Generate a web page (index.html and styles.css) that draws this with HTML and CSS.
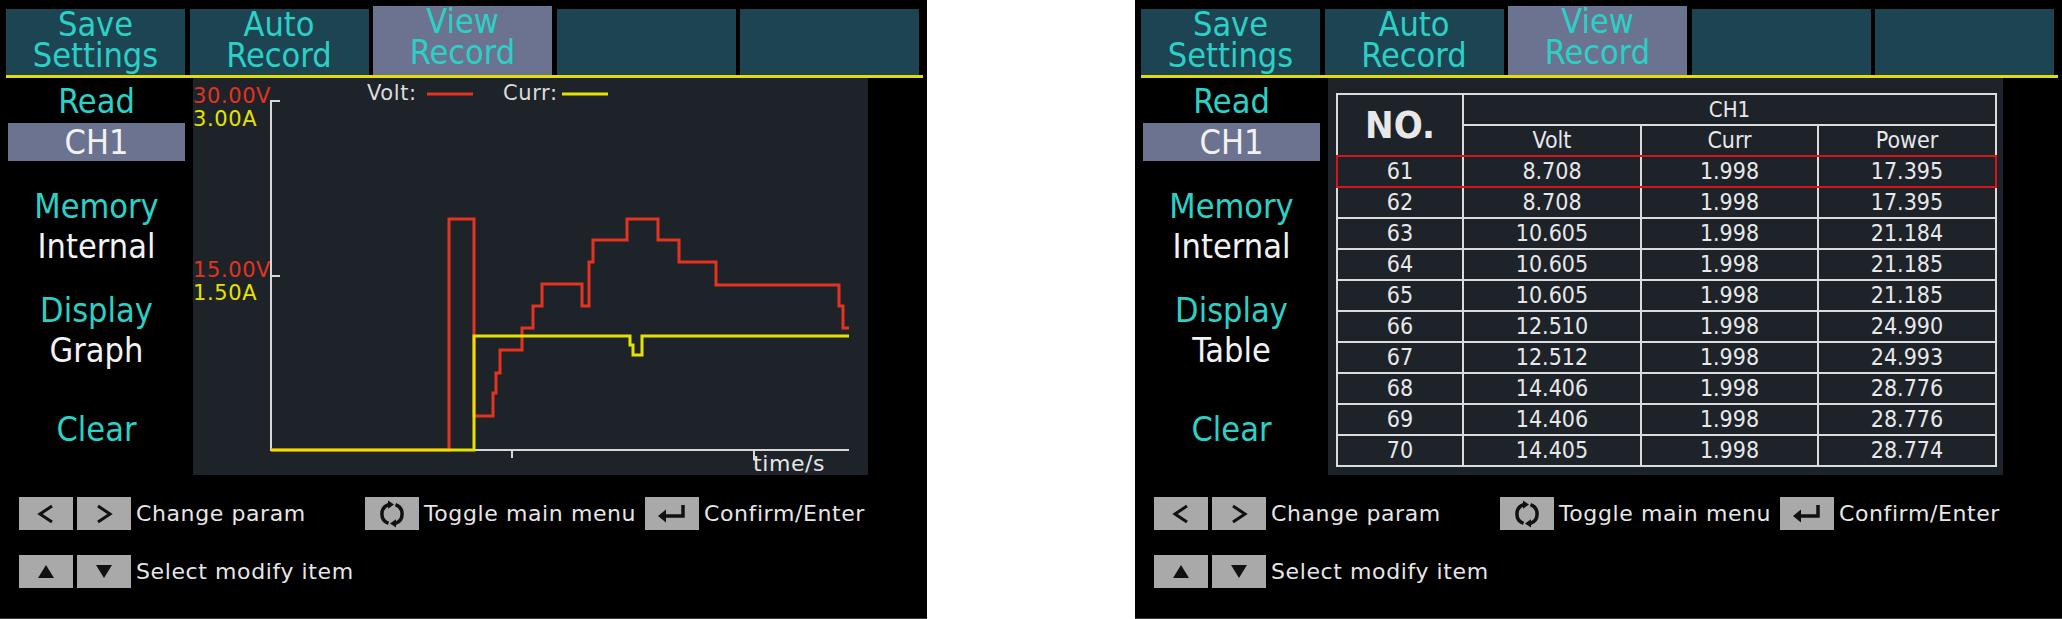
FILE: index.html
```html
<!DOCTYPE html>
<html lang="en">
<head>
    <meta charset="UTF-8">
    <title>Data Record - Graph / Table</title>
    <link rel="stylesheet" href="styles.css">
</head>
<body>

<div class="page">

    <!-- Screen 1: record shown as a graph -->
    <div class="screen">
        <div class="tabs">
            <div class="tab"><div>Save</div><div>Settings</div></div>
            <div class="tab"><div>Auto</div><div>Record</div></div>
            <div class="tab active"><div>View</div><div>Record</div></div>
            <div class="tab"></div>
            <div class="tab"></div>
        </div>
        <div class="main">
            <div class="side">
                <div class="side-read">Read</div>
                <div class="side-box">CH1</div>
                <div class="side-group">
                    <div class="side-label">Memory</div>
                    <div class="side-value">Internal</div>
                </div>
                <div class="side-group">
                    <div class="side-label">Display</div>
                    <div class="side-value">Graph</div>
                </div>
                <div class="side-label side-clear">Clear</div>
            </div>
            <div class="panel">
                <svg class="chart" width="675" height="397" viewBox="0 0 675 397">
                    <text class="lbl-volt" x="0" y="25">30.00V</text>
                    <text class="lbl-curr" x="0" y="48">3.00A</text>
                    <text class="lbl-volt" x="0" y="199">15.00V</text>
                    <text class="lbl-curr" x="0" y="222">1.50A</text>

                    <text class="lbl-legend" x="174" y="22">Volt:</text>
                    <line class="tr-volt" x1="234" y1="16" x2="280" y2="16"/>
                    <text class="lbl-legend" x="310" y="22">Curr:</text>
                    <line class="tr-curr" x1="369" y1="16" x2="415" y2="16"/>

                    <path class="axis" d="M87 23 H78 V372 H656 M78 198 H87 M319 372 V380 M561 372 V382"/>
                    <text class="lbl-time" x="560" y="393">time/s</text>

                    <path class="tr-volt" d="M78 372 H256 V141 H281 V338 H300 V315 H303 V295 H307 V272 H329 V250 H340 V228 H349 V206 H389 V228 H396 V184 H400 V162 H434 V141 H465 V162 H486 V184 H523 V207 H646 V228 H650 V250 H656"/>
                    <path class="tr-curr" d="M78 372 H281 V258 H437 V267 H440 V277 H449 V258 H656"/>
                </svg>
            </div>
        </div>
        <div class="keys">
            <div class="key-row">
                <div class="hint hint-first">
                    <span class="key"><svg width="18" height="22" viewBox="0 0 18 22"><polyline class="ico" points="15,3 3,11 15,19"/></svg></span>
                    <span class="key"><svg width="18" height="22" viewBox="0 0 18 22"><polyline class="ico" points="3,3 15,11 3,19"/></svg></span>
                    <span class="hint-text">Change param</span>
                </div>
                <div class="hint hint-mid">
                    <span class="key"><svg width="26" height="30" viewBox="0 0 26 30"><path class="ico-bold" d="M9.5 5.6 A10 10 0 0 0 9.5 24.4 M16.5 24.4 A10 10 0 0 0 16.5 5.6"/><polygon class="ico-fill" points="9,1.5 15,5.6 9,9.7"/><polygon class="ico-fill" points="17,20.3 11,24.4 17,28.5"/></svg></span>
                    <span class="hint-text">Toggle main menu</span>
                </div>
                <div class="hint">
                    <span class="key"><svg width="30" height="20" viewBox="0 0 30 20"><path class="ico-bold" d="M26 1 V12 H7"/><polygon class="ico-fill" points="1,12 9,5.5 9,18.5"/></svg></span>
                    <span class="hint-text">Confirm/Enter</span>
                </div>
            </div>
            <div class="key-row">
                <div class="hint">
                    <span class="key"><svg width="16" height="13" viewBox="0 0 16 13"><polygon class="ico-fill" points="0,13 8,0 16,13"/></svg></span>
                    <span class="key"><svg width="16" height="13" viewBox="0 0 16 13"><polygon class="ico-fill" points="0,0 16,0 8,13"/></svg></span>
                    <span class="hint-text">Select modify item</span>
                </div>
            </div>
        </div>
    </div>

    <!-- Screen 2: record shown as a table -->
    <div class="screen">
        <div class="tabs">
            <div class="tab"><div>Save</div><div>Settings</div></div>
            <div class="tab"><div>Auto</div><div>Record</div></div>
            <div class="tab active"><div>View</div><div>Record</div></div>
            <div class="tab"></div>
            <div class="tab"></div>
        </div>
        <div class="main">
            <div class="side">
                <div class="side-read">Read</div>
                <div class="side-box">CH1</div>
                <div class="side-group">
                    <div class="side-label">Memory</div>
                    <div class="side-value">Internal</div>
                </div>
                <div class="side-group">
                    <div class="side-label">Display</div>
                    <div class="side-value">Table</div>
                </div>
                <div class="side-label side-clear">Clear</div>
            </div>
            <div class="panel">
                <table class="records">
                    <colgroup>
                        <col style="width: 126px">
                        <col style="width: 178px">
                        <col style="width: 177px">
                        <col style="width: 178px">
                    </colgroup>
                    <thead>
                        <tr>
                            <th class="col-no" rowspan="2">NO.</th>
                            <th class="col-ch" colspan="3">CH1</th>
                        </tr>
                        <tr>
                            <th>Volt</th>
                            <th>Curr</th>
                            <th>Power</th>
                        </tr>
                    </thead>
                    <tbody>
                        <tr class="current"><td>61</td><td>8.708</td><td>1.998</td><td>17.395</td></tr>
                        <tr><td>62</td><td>8.708</td><td>1.998</td><td>17.395</td></tr>
                        <tr><td>63</td><td>10.605</td><td>1.998</td><td>21.184</td></tr>
                        <tr><td>64</td><td>10.605</td><td>1.998</td><td>21.185</td></tr>
                        <tr><td>65</td><td>10.605</td><td>1.998</td><td>21.185</td></tr>
                        <tr><td>66</td><td>12.510</td><td>1.998</td><td>24.990</td></tr>
                        <tr><td>67</td><td>12.512</td><td>1.998</td><td>24.993</td></tr>
                        <tr><td>68</td><td>14.406</td><td>1.998</td><td>28.776</td></tr>
                        <tr><td>69</td><td>14.406</td><td>1.998</td><td>28.776</td></tr>
                        <tr><td>70</td><td>14.405</td><td>1.998</td><td>28.774</td></tr>
                    </tbody>
                </table>
            </div>
        </div>
        <div class="keys">
            <div class="key-row">
                <div class="hint hint-first">
                    <span class="key"><svg width="18" height="22" viewBox="0 0 18 22"><polyline class="ico" points="15,3 3,11 15,19"/></svg></span>
                    <span class="key"><svg width="18" height="22" viewBox="0 0 18 22"><polyline class="ico" points="3,3 15,11 3,19"/></svg></span>
                    <span class="hint-text">Change param</span>
                </div>
                <div class="hint hint-mid">
                    <span class="key"><svg width="26" height="30" viewBox="0 0 26 30"><path class="ico-bold" d="M9.5 5.6 A10 10 0 0 0 9.5 24.4 M16.5 24.4 A10 10 0 0 0 16.5 5.6"/><polygon class="ico-fill" points="9,1.5 15,5.6 9,9.7"/><polygon class="ico-fill" points="17,20.3 11,24.4 17,28.5"/></svg></span>
                    <span class="hint-text">Toggle main menu</span>
                </div>
                <div class="hint">
                    <span class="key"><svg width="30" height="20" viewBox="0 0 30 20"><path class="ico-bold" d="M26 1 V12 H7"/><polygon class="ico-fill" points="1,12 9,5.5 9,18.5"/></svg></span>
                    <span class="hint-text">Confirm/Enter</span>
                </div>
            </div>
            <div class="key-row">
                <div class="hint">
                    <span class="key"><svg width="16" height="13" viewBox="0 0 16 13"><polygon class="ico-fill" points="0,13 8,0 16,13"/></svg></span>
                    <span class="key"><svg width="16" height="13" viewBox="0 0 16 13"><polygon class="ico-fill" points="0,0 16,0 8,13"/></svg></span>
                    <span class="hint-text">Select modify item</span>
                </div>
            </div>
        </div>
    </div>

</div>

</body>
</html>
```

FILE: styles.css
```css
body {
    margin: 0;
    background: #fff;
    font-family: "DejaVu Sans", sans-serif;
}
.page {
    display: flex;
    gap: 208px;
}
.screen {
    width: 927px;
    height: 619px;
    box-sizing: border-box;
    padding-top: 9px;
    background: #000;
    border-bottom: 1px solid #3a3a3a;
}

/* top menu */
.tabs {
    display: flex;
    gap: 4.5px;
    height: 66px;
    margin: 0 4px 0 6px;
    padding-right: 4px;
    border-bottom: 3px solid #e2dc0a;
}
.tab {
    width: 179px;
    height: 66px;
    flex: none;
    background: #1d4452;
    color: #2bd0c6;
    font-family: "DejaVu Sans Condensed", "DejaVu Sans", sans-serif;
    font-stretch: condensed;
    font-size: 34px;
    line-height: 31px;
    text-align: center;
}
.tab.active {
    height: 69px;
    margin-top: -3px;
    background: #6b7390;
}

/* left menu + content */
.main {
    display: flex;
    height: 397px;
}
.side {
    width: 193px;
    flex: none;
    display: flex;
    flex-direction: column;
    align-items: center;
    font-family: "DejaVu Sans Condensed", "DejaVu Sans", sans-serif;
    font-stretch: condensed;
    font-size: 34px;
    line-height: 40px;
    text-align: center;
}
.side-read {
    margin-top: 5px;
    line-height: 36px;
    color: #2bd0c6;
}
.side-box {
    width: 177px;
    height: 38px;
    margin-top: 4px;
    line-height: 38px;
    background: #6b7390;
    color: #f2f2f2;
}
.side-group {
    margin-top: 25px;
}
.side-group + .side-group {
    margin-top: 24px;
}
.side-label {
    color: #2bd0c6;
}
.side-value {
    color: #f2f2f2;
}
.side-clear {
    margin-top: 39px;
}
.panel {
    width: 675px;
    height: 397px;
    flex: none;
    background: #1e232a;
}

/* chart */
.chart {
    display: block;
    font-family: "DejaVu Sans", sans-serif;
    font-size: 21px;
    letter-spacing: 0.6px;
}
.lbl-volt {
    fill: #e3341f;
}
.lbl-curr {
    fill: #e5e200;
}
.lbl-legend {
    fill: #dcdcdc;
}
.lbl-time {
    fill: #e6e6e6;
    font-size: 22px;
}
.axis {
    fill: none;
    stroke: #d8d8d8;
    stroke-width: 2;
}
.tr-volt {
    fill: none;
    stroke: #e3341f;
    stroke-width: 3;
}
.tr-curr {
    fill: none;
    stroke: #e5e200;
    stroke-width: 3;
}

/* record table */
.records {
    margin: 15px 0 0 8px;
    width: 660px;
    table-layout: fixed;
    border-collapse: collapse;
    color: #e8e8e8;
    font-family: "DejaVu Sans Condensed", "DejaVu Sans", sans-serif;
    font-stretch: condensed;
    font-size: 23px;
}
.records th,
.records td {
    height: 29px;
    padding: 0;
    border: 2px solid #dcdcdc;
    text-align: center;
    vertical-align: middle;
    font-weight: normal;
    line-height: 29px;
}
.records .col-no {
    font-size: 38px;
    font-weight: bold;
}
.records .col-ch {
    font-size: 22px;
}
.records tr.current {
    outline: 2px solid #d4161a;
    outline-offset: -1px;
}

/* key hints */
.keys {
    margin-top: 22px;
    padding-left: 19px;
}
.key-row {
    display: flex;
    height: 33px;
    margin-bottom: 25px;
}
.hint {
    display: flex;
    align-items: center;
    gap: 4px;
}
.hint-first {
    width: 346px;
}
.hint-mid {
    width: 280px;
}
.key {
    width: 54px;
    height: 33px;
    display: flex;
    align-items: center;
    justify-content: center;
    background: #a9a9a9;
}
.hint-text {
    margin-left: 1px;
    color: #e6e6e6;
    font-size: 22px;
    letter-spacing: 0.6px;
    line-height: 33px;
    white-space: nowrap;
}
.ico {
    fill: none;
    stroke: #111;
    stroke-width: 3;
}
.ico-bold {
    fill: none;
    stroke: #111;
    stroke-width: 3.5;
}
.ico-fill {
    fill: #111;
}
```
